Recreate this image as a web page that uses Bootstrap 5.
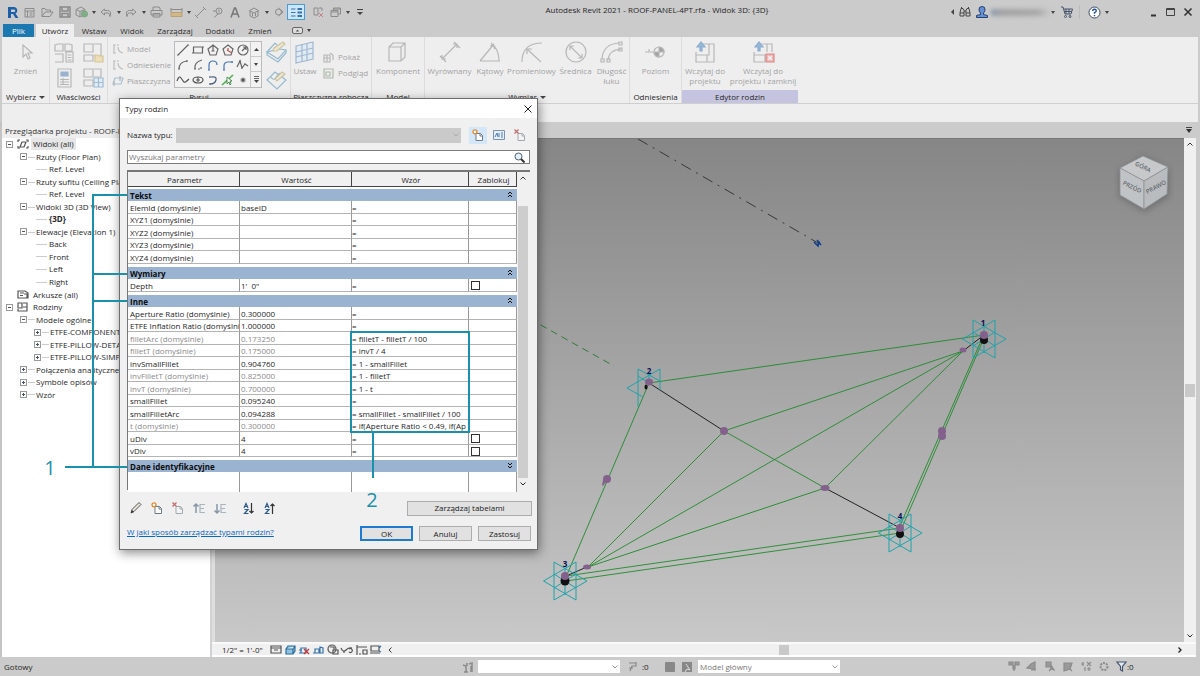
<!DOCTYPE html>
<html lang="pl">
<head>
<meta charset="utf-8">
<meta name="viewport" content="width=device-width, initial-scale=1">
<title>Autodesk Revit 2021</title>
<link href="https://cdn.jsdelivr.net/npm/bootstrap@5.3.0/dist/css/bootstrap.min.css" rel="stylesheet">
<style>
:root{--chrome:#cbcbcb;--pane:#eeeeee;--accent:#1b90ab;--line:#d4d4d4}
body{font-family:"Open Sans","Noto Sans",sans-serif;font-size:8px;line-height:12px;color:#262626;background:var(--chrome)}
button,input,select{font:inherit;color:inherit}
svg{display:block;flex:none;overflow:visible}
.ico{fill:none;stroke:#8b8b8b;stroke-width:1.2}
.tb{border:0;background:none;padding:0;display:flex;align-items:center;justify-content:center;flex:none}
.q17{width:17px}.q18{width:18px}.q7{width:7px}
.titlebar{height:24px}
.titlebar .ico{stroke-width:1}
.qsep{width:1px;height:14px;background:#bbb;margin:0 1px}
.caret{width:0;height:0;border:2px solid transparent;border-top:3px solid #444;border-bottom:0}
.panel h2 .caret{display:inline-block;vertical-align:middle;margin-left:3px;border-width:3px;border-bottom:0}
.on{background:#cce6fa;outline:1px solid #4b9bd8;outline-offset:-1px;height:16px}
.acct{width:58px;height:7px;margin-left:1px;background:linear-gradient(90deg,#8f9bb0,#a2a2a2 20%,#a8a8a8 80%,#c6c6c6);filter:blur(2px)}
.tabs{height:13px;padding-left:3px}
.tabs a{color:#2d2d2d;text-align:center;text-decoration:none;line-height:13px;height:13px}
.tabs .file{width:31px;background:#1c78b0;color:#fff;margin-right:2px}
.tabs .cur{width:38px;background:var(--pane)}
.t40{width:40px}.t36{width:36px}.t50{width:50px}
.ribbon{height:67px;background:var(--pane);margin:0 2px;border-bottom:1px solid #cfcfcf}
.panel{border-right:1px solid #dcdcdc;flex:none}
.panel h2{font-size:8px;line-height:13px;height:13px;margin:0;font-weight:400;text-align:center;white-space:nowrap}
.pbody{height:53px}
.rb{border:0;background:none;padding:4px 0 0;display:flex;flex-direction:column;align-items:center;color:#a3a3a3;line-height:10px;gap:3px;flex:none;white-space:nowrap}
.rb svg,.faded svg{opacity:.55}
.rs{border:0;background:none;padding:0;display:flex;align-items:center;gap:4px;color:#a3a3a3;height:16px;white-space:nowrap}
.gallery{width:88px;height:47px;border:1px solid #bbb;background:#f2f2f2}
.gallery .cells{display:grid;grid-template-columns:repeat(5,15px);flex:1}
.gscroll{width:11px;border-left:1px solid #c6c6c6}
.gscroll button{height:15px;width:10px;border-bottom:1px solid #ccc}
.optbar{height:18px;background:var(--pane);margin:0 2px}
.browser{width:212px;border-left:2px solid #c4c4c4;border-right:2px solid #d2d2d2;background:#fff}
.browser h1{font-size:8px;font-weight:400;line-height:17px;height:16px;margin:0;padding-left:3px;background:#eee;white-space:nowrap;overflow:hidden;color:#333}
.tree{height:263px;display:grid;grid-template-rows:repeat(21,1fr);padding:0;margin:0;list-style:none}
.tree li{display:flex;align-items:center;white-space:nowrap;position:relative}
.l0{padding-left:4px}.l1{padding-left:18px}.l2{padding-left:32px}.l3{padding-left:34px}
.tree .pm{width:7px;height:7px;border:1px solid #999;background:#fff;position:relative;margin-right:9px;flex:none}
.pm:before{content:"";position:absolute;left:1px;right:1px;top:2px;height:1px;background:#456}
.pm.plus:after{content:"";position:absolute;top:1px;bottom:1px;left:2px;width:1px;background:#456}
.tree .l0 .pm{margin-right:4px}
.pm + span:before{content:"";position:absolute;height:1px;width:7px;background:#ccc;margin-left:-8px;top:6px}
.dash{width:11px;height:1px;background:#ccc;margin-right:2px;flex:none}
.tree .trunk{position:absolute;left:22px;width:1px;background:#ddd}
.view{min-width:0}
.doctab{height:16px}
.scene{background:linear-gradient(#868686,#c8c8c8);min-height:200px;border-top:1px solid #777}
.vscroll{width:12px;background:#f0f0f0}
.vthumb{width:10px;height:13px;background:#c9c9c9}
.viewbar{height:15px;background:#f0f0f0;border-top:2px solid #fafafa;border-bottom:2px solid #fff}
.status{height:19px}
.status select{height:13px;border:0;border-radius:0;background:#fff;font-size:8px;line-height:12px;padding:0 2px;color:#777;appearance:none}
.selbox{position:relative}
.selbox svg{position:absolute;right:2px;top:5px}
/* family types window */
.dlg{position:absolute;left:119px;top:98px;width:419px;height:452px;background:#f0f0f0;border:1px solid #6d6d6d;box-shadow:1px 3px 10px rgba(0,0,0,.45)}
.dlg header{height:19px;background:#fff;padding:0 5px}
.dlg .inner{padding:8px 7px 0}
.typesel{width:285px;height:15px;border:0;background:#cacaca;appearance:none;border-radius:0}
.find{height:14px;border:1px solid #7d7d7d;background:#fff;margin-top:6px}
.find input{border:0;outline:0;height:12px;padding:0 1px;background:none;flex:1}
.find input::placeholder{color:#777;opacity:1}
.gridwrap{margin-top:6px;height:320px;border-top:2px solid #777;border-left:1px solid #777}
.ptab{width:389px;table-layout:fixed;border-collapse:separate;border-spacing:0;background:#fff;flex:none;align-self:flex-start}
.ptab td,.ptab th{padding:0 0 0 2px;height:12px;line-height:11px;border-right:1px solid #999;border-bottom:1px solid #b4b4b4;white-space:nowrap;overflow:hidden}
.ptab tr.h13 td{height:13px}
.ptab thead th{height:15px;font-weight:400;text-align:center;background:#f0f0f0;border-color:#444}
.ptab tr.gap td{height:3px;border:0;line-height:1px}
.ptab tr.gap:first-child td{height:2px}
.ptab tr.sec th{background:#9ab3d1;height:12px;border:0;font-weight:700;color:#0c0c0c}
.ptab tr.gray td:nth-child(-n+2){color:#8a8a8a}
.ptab td:nth-child(2){padding-left:1px}
.ptab td:nth-child(3){padding-left:0}
.ptab tr.tail td{height:20px;border-bottom:0}
.ptab input{appearance:none;width:9px;height:9px;border:1px solid #333;background:#fff;margin:1px 0 0;display:block}
.sec button{float:right;margin:1px 4px 0 0}
.tthumb{background:#cdcdcd;width:10px;flex:1}
.wb{border:1px solid #adadad;background:#e1e1e1;padding:0;height:15px;line-height:12px;width:53px;color:#222}
.wb.def{border:2px solid #1f7ad1;line-height:11px}
.dlg a{color:#0a66c2}
.notes{position:absolute;left:0;top:0;pointer-events:none}
</style>
</head>
<body class="min-vh-100 d-flex flex-column position-relative overflow-hidden">

<svg width="0" height="0" class="position-absolute">
<defs>
<symbol id="newdoc" viewBox="0 0 12 12"><path d="M4 4.500h4.500l2 2v5h-6.500z" fill="#fff" stroke="#6d7a87"/><path d="M8 4.500v2.500h2.500" fill="none" stroke="#6d7a87"/><circle cx="3" cy="2.800" r="2" fill="#fff" stroke="#e0872f" stroke-width="1.300"/></symbol>
<symbol id="deldoc" viewBox="0 0 12 12"><path d="M4 4.500h4.500l2 2v5h-6.500z" fill="#f4f4f4" stroke="#a3a9ad"/><path d="M8 4.500v2.500h2.500" fill="none" stroke="#a3a9ad"/><path d="M.500.500l4 4M4.500.500l-4 4" stroke="#c06a6a" stroke-width="1.200" fill="none"/></symbol>
<symbol id="star" viewBox="-24 -22 48 44"><path d="M-21.500 0L11 -19V19ZM22 0L-11 -19V19ZM0 -13V14M-11 7L11 -7M-11 -7L11 7" fill="none" stroke="#1fa3ab" stroke-width="1"/></symbol>
<symbol id="chev" viewBox="0 0 6 4"><path d="M.500.500L3 3L5.500.500" fill="none" stroke="currentColor"/></symbol>
</defs>
</svg>

<header>
<div class="titlebar d-flex align-items-center">
  <div class="d-flex align-items-center ps-1 flex-shrink-0" style="width:365px">
    <button class="tb q17" aria-label="Revit"><svg width="12" height="13" viewBox="0 0 12 13"><path d="M1 1h6.500a3.500 3.500 0 0 1 1 6.500l3 4.500h-3l-2.500-4h-2v4h-3zM4 3.500v2.500h3a1.250 1.250 0 0 0 0-2.500z" fill="#1d5fa6" fill-rule="evenodd"/></svg></button>
    <button class="tb q17" aria-label="Strona główna"><svg class="ico" width="11" height="11"><path d="M1 1.500h9v8.500h-9zM1 4h9M3.500 4v6M5.500 6h3M5.500 8h3"/></svg></button>
    <button class="tb q18" aria-label="Otwórz"><svg class="ico" width="13" height="11"><path d="M1 9.500v-8h3l1 1.500h4.500v2M1 9.500l3-4.500h8l-3 4.500z"/></svg></button>
    <button class="tb q17" aria-label="Zapisz"><svg class="ico" width="12" height="12"><path d="M1 1h10v10h-10zM3 1v4h6v-4M3 11v-3.500h6v3.500" style="stroke-width:1.500"/></svg></button>
    <button class="tb q17" aria-label="Synchronizuj"><svg class="ico" width="13" height="12"><path d="M1 3.500l5-2.500 4 2.500v5l-5 2.500-4-2zM1 3.500l4 2 5-2M5 5.500v5"/><circle cx="9.500" cy="8" r="3" fill="#7fae86" stroke="#77a87e"/></svg></button>
    <button class="tb q7" aria-label="Więcej"><i class="caret"></i></button>
    <button class="tb q18" aria-label="Cofnij"><svg class="ico" width="12" height="9"><path d="M4.500 1l-3.500 3 3.500 3v-2h3.500q2 .500 2 3.500 2-6-2.500-6h-3z"/></svg></button>
    <button class="tb q7" aria-label="Więcej"><i class="caret"></i></button>
    <button class="tb q18" aria-label="Ponów"><svg class="ico" width="12" height="9"><path d="M7.500 1l3.500 3-3.500 3v-2h-3.500q-2 .500-2 3.500-2-6 2.500-6h3z"/></svg></button>
    <button class="tb q7" aria-label="Więcej"><i class="caret"></i></button>
    <button class="tb q18" aria-label="Drukuj"><svg class="ico" width="13" height="12"><path d="M3 4.500v-3.500h6l1 1v2.500M1 4.500h11v4.500h-11zM3 9v-1.500h7v3.500h-7z"/></svg></button>
    <i class="qsep"></i>
    <button class="tb q18" aria-label="Mierz"><svg class="ico" width="13" height="11"><path d="M1 1v4M12 1v4M1 2.500h11"/><path d="M1 5.500h11v4h-11z" fill="#d3b887" stroke="#b79f77"/></svg></button>
    <button class="tb q7" aria-label="Więcej"><i class="caret"></i></button>
    <button class="tb q17" aria-label="Wymiar"><svg class="ico" width="11" height="11"><path d="M1.500 9.500l8-8M0 8l3 3M8 0l3 3"/></svg></button>
    <button class="tb q17" aria-label="Etykieta"><svg class="ico" width="11" height="11"><circle cx="7" cy="4" r="3"/><path d="M4 4h-3M6 7l-4 3.500M7 2.500v3"/></svg></button>
    <button class="tb q17" aria-label="Tekst"><svg class="ico" width="10" height="11"><path d="M1 10.500l3.500-9.500h1l3.500 9.500M2.500 7h5" style="stroke:#777;stroke-width:1.500"/></svg></button>
    <i class="qsep"></i>
    <button class="tb q18" aria-label="Widok 3D"><svg class="ico" width="12" height="11"><path d="M1 4l5-3 5 3M2 4v5l4 2 4-2v-5M4.500 6v3M7.500 6v3M2 4l4 2 4-2"/></svg></button>
    <button class="tb q7" aria-label="Więcej"><i class="caret"></i></button>
    <button class="tb q17" aria-label="Przekrój"><svg class="ico" width="10" height="10"><circle cx="4.500" cy="5" r="3"/><path d="M4.500 1l4.500 4-4.500 4"/></svg></button>
    <button class="tb q18 on" aria-label="Cienkie linie"><svg class="ico" width="13" height="11"><path d="M1 2h4.500M1 5.500h4.500M1 9h4.500" stroke="#3873ad"/><path d="M7.500 2h4.500M7.500 5.500h4.500M7.500 9h4.500" style="stroke:#3873ad;stroke-width:2"/></svg></button>
    <button class="tb q18 ms-1" aria-label="Zamknij ukryte"><svg class="ico" width="11" height="11"><path d="M1 1h4v7h-4zM6 1h3v3"/><path d="M6 6l4 4M10 6l-4 4" stroke="#c78484"/></svg></button>
    <button class="tb q17" aria-label="Przełącz okna"><svg class="ico" width="12" height="11"><path d="M1 3.500h7v6h-7zM1 5h7M3.500 3.500v-2.500h7v6h-2.500M3.500 2h7"/></svg></button>
    <button class="tb q7" aria-label="Więcej"><i class="caret"></i></button>
    <button class="tb q17" aria-label="Dostosuj"><svg width="6" height="7"><path d="M0 .500h6" stroke="#444"/><path d="M0 3h6l-3 3z" fill="#444"/></svg></button>
  </div>
  <div class="flex-grow-1 text-center text-nowrap pb-1">Autodesk Revit 2021 - ROOF-PANEL-4PT.rfa - Widok 3D: {3D}</div>
  <div class="d-flex align-items-center flex-shrink-0" style="width:251px">
    <button class="tb q7" aria-label="Zwiń"><svg width="3" height="6"><path d="M3 0v6l-3-3z" fill="#444"/></svg></button>
    <button class="tb q17" aria-label="Szukaj"><svg class="ico" width="12" height="12"><path d="M1 7l1-4.500h2l1 2v5.500h-4zM7 4.500l1-2h2l1 4.500v3h-4zM5 5h2M1 7h4M7 7h4" stroke="#444"/><path d="M2.500 1v2M9.500 1v2" stroke="#444"/></svg></button>
    <button class="tb q17" aria-label="Konto"><svg width="12" height="12"><path d="M6 .500q3.500 0 3 3.500-.200 2-1.500 3v1.500l4 1v2h-11v-2l4-1v-1.500q-1.300-1-1.500-3-.500-3.500 3-3.500z" fill="#6690d6" stroke="#24406e"/></svg></button>
    <span class="acct"></span>
    <button class="tb q7" aria-label="Więcej"><i class="caret"></i></button>
    <button class="tb" style="width:22px" aria-label="Sklep"><svg class="ico" width="12" height="12"><path d="M0 1h2l2 7h6l1.500-5h-9M5 3v5M8 3v5M3 5.500h8" stroke="#47556b"/><circle cx="4.500" cy="10.500" r="1" stroke="#47556b"/><circle cx="9" cy="10.500" r="1" stroke="#47556b"/></svg></button>
    <i class="qsep"></i>
    <button class="tb q18 ms-1" aria-label="Pomoc"><svg width="13" height="13"><circle cx="6.500" cy="6.500" r="5.500" fill="#fff" stroke="#3b4b66"/><path d="M4.700 5q0-1.800 1.800-1.800t1.800 1.500q0 1-1.800 2v1M6.500 9v1.300" fill="none" stroke="#234d9a" stroke-width="1.400"/></svg></button>
    <button class="tb q7" aria-label="Więcej"><i class="caret"></i></button>
    <span class="flex-grow-1"></span>
    <button class="tb q18" aria-label="Minimalizuj"><svg width="7" height="9"><path d="M1 7.500h5" stroke="#333" stroke-width="2"/></svg></button>
    <button class="tb q17" aria-label="Maksymalizuj"><svg width="9" height="8"><path d="M.500.500h8v7h-8zM.500 1.500h8" fill="none" stroke="#444"/></svg></button>
    <button class="tb q17 me-1" aria-label="Zamknij"><svg width="8" height="8"><path d="M.500.500l7 7M7.500.500l-7 7" stroke="#333" stroke-width="1.600"/></svg></button>
  </div>
</div>
<nav class="tabs d-flex align-items-center">
  <a href="#" class="file">Plik</a><a href="#" class="cur">Utwórz</a><a href="#" class="t40">Wstaw</a><a href="#" class="t36">Widok</a><a href="#" class="t50">Zarządzaj</a><a href="#" class="t40">Dodatki</a><a href="#" class="t40">Zmień</a>
  <button class="tb ms-2 ps-1 gap-1" aria-label="Zwiń wstążkę"><svg width="11" height="7"><rect x=".5" y=".5" width="10" height="6" rx="1.500" fill="#ddd" stroke="#666"/><path d="M4 4.500l1.500-2 1.500 2z" fill="#444"/></svg><i class="caret"></i></button>
</nav>
</header>

<section class="ribbon d-flex" aria-label="Wstążka">
  <div class="panel" style="width:48px"><div class="pbody d-flex justify-content-center"><button class="rb"><svg class="ico" width="20" height="22"><path d="M7 4v12l3-3 2 5 2-1-2-5h4z"/></svg>Zmień</button></div><h2>Wybierz<i class="caret"></i></h2></div>
  <div class="panel" style="width:58px"><div class="pbody faded d-grid pt-1" style="grid-template-columns:1fr 1fr;justify-items:center;align-items:center">
    <button class="tb" aria-label="Właściwości rodziny"><svg class="ico" width="20" height="20"><path d="M1 2l3-1h5v7h-8zM11 1h4l3 1v6h-7zM1 11h8v8h-8M12 9h7v10h-7zM13.500 12h4M13.500 14.500h4M13.500 17h4"/></svg></button>
    <button class="tb" aria-label="Typy"><svg class="ico" width="20" height="20"><path d="M1 1h9v8h-9zM11 1h7v12h-7M1 12h9v6h-9z"/><path d="M12 12h3l1 1h4v6h-8z" fill="#ecd18f" stroke="#c9a64e"/></svg></button>
    <button class="tb" aria-label="Właściwości"><svg class="ico" width="15" height="20"><path d="M1 1h13v18h-13z"/><path d="M4 4h7v4h-7z" fill="#5584b5" stroke="#5584b5"/><path d="M3 11.500h9M3 14h9M3 16.500h9M6 10v7"/></svg></button>
    <button class="tb" aria-label="Typy rodzin"><svg class="ico" width="20" height="20"><path d="M1 1h9v8h-9zM11 1h7v8h-7M1 12h9v6h-9z"/><path d="M11 10h9v9h-9zM15.500 10v9M11 14.500h9" fill="#dcebf8" stroke="#5f94c4"/></svg></button>
  </div><h2>Właściwości</h2></div>
  <div class="panel" style="width:183px"><div class="pbody d-flex pt-1">
    <div class="faded" style="width:66px;padding-left:4px">
      <button class="rs"><svg class="ico" width="11" height="10"><path d="M2 1v8M1 1h3M1 9h3M6 3q0 5 5 6M5 1h2M10 9h1" stroke="#999"/></svg>Model</button>
      <button class="rs"><svg class="ico" width="11" height="10"><path d="M2 1v8M1 1h3M1 9h3M6 3q0 5 5 6M5 1h2M10 9h1" stroke="#999"/></svg>Odniesienie</button>
      <button class="rs"><svg class="ico" width="11" height="10"><path d="M3 2h8l-2 6h-8z" stroke="#6a9ac4"/><path d="M8 0v5M2 5v5" stroke="#888"/></svg>Płaszczyzna</button>
    </div>
    <div class="gallery d-flex">
      <div class="cells">
        <button class="tb" aria-label="Linia"><svg class="ico" width="12" height="12" style="stroke:#666"><path d="M1 11l10-10M0 11h2M10 1h2"/></svg></button>
        <button class="tb" aria-label="Prostokąt"><svg class="ico" width="12" height="12" style="stroke:#666"><path d="M1.500 3h9v6h-9zM0 9h3M9 3h3"/></svg></button>
        <button class="tb" aria-label="Wielokąt wpisany"><svg class="ico" width="12" height="12" style="stroke:#666"><path d="M6 1l5 4-2 6h-6l-2-6zM6 2v5M4.500 7h3"/></svg></button>
        <button class="tb" aria-label="Wielokąt opisany"><svg class="ico" width="12" height="12" style="stroke:#666"><path d="M6 1l5 4-2 6h-6l-2-6z"/><path d="M5 6l5 3M6 4v3" stroke="#b55"/></svg></button>
        <button class="tb" aria-label="Okrąg"><svg class="ico" width="12" height="12" style="stroke:#666"><circle cx="6" cy="6" r="5"/><path d="M5 7l4-4M6 3h3v3"/></svg></button>
        <button class="tb" aria-label="Łuk"><svg class="ico" width="12" height="12" style="stroke:#666"><path d="M2 10q0-7 8-8M1 10h2M10 1v2M4 4h1"/></svg></button>
        <button class="tb" aria-label="Łuk środkowy"><svg class="ico" width="12" height="12" style="stroke:#666"><path d="M3 10q-1-7 7-9M2 10h2M9 8v2M6 10h2"/></svg></button>
        <button class="tb" aria-label="Łuk styczny"><svg class="ico" width="12" height="12" style="stroke:#4677b0"><path d="M2 11v-5q0-4 4-4t4 4M1 11h2"/></svg></button>
        <button class="tb" aria-label="Zaokrąglenie"><svg class="ico" width="12" height="12" style="stroke:#4677b0"><path d="M2 11v-4q0-4 4-4h5M1 11h2M10 2v2"/></svg></button>
        <button class="tb" aria-label="Splajn"><svg class="ico" width="13" height="12" style="stroke:#666"><path d="M1 8l3-6 2 7 3-4 3 2M3 2h2M5 9h2M8 5h2"/></svg></button>
        <button class="tb" aria-label="Splajn przez punkty"><svg class="ico" width="12" height="12" style="stroke:#555"><path d="M0 7q2-6 4-3t3 4 5-3"/></svg></button>
        <button class="tb" aria-label="Elipsa"><svg class="ico" width="12" height="12" style="stroke:#555"><ellipse cx="6" cy="6" rx="5" ry="3"/><path d="M6 3v5M4 6h4"/></svg></button>
        <button class="tb" aria-label="Elipsa częściowa"><svg class="ico" width="12" height="12" style="stroke:#4a5a78"><path d="M4 3q6-1 5 3t-6 4"/><path d="M3 2v2M3 9v2"/></svg></button>
        <button class="tb" aria-label="Wybierz linie"><svg class="ico" width="12" height="12"><path d="M0 11l11-10" stroke="#4cae4f" stroke-width="1.600"/><path d="M5 3v7l2-2 1 3 1-1-1-3h2z" fill="#fff" stroke="#2f7d35" stroke-width=".8"/></svg></button>
        <button class="tb" aria-label="Punkt"><svg class="ico" width="12" height="12"><circle cx="6" cy="6" r="2" fill="#555" stroke="#999"/></svg></button>
      </div>
      <div class="gscroll"><button class="tb" aria-label="W górę"><svg width="5" height="3"><path d="M0 3h5l-2.500-3z" fill="#444"/></svg></button><button class="tb" aria-label="W dół"><i class="caret"></i></button><button class="tb border-0" aria-label="Rozwiń"><svg width="5" height="7"><path d="M0 .500h5M0 2.500h5" stroke="#666"/><path d="M0 4h5l-2.500 3z" fill="#444"/></svg></button></div>
    </div>
    <div class="d-flex flex-column justify-content-between align-items-center faded flex-grow-1">
      <button class="tb" aria-label="Rysuj na powierzchni"><svg class="ico" width="21" height="22"><path d="M1 11l8-9 4 4M13 8l7 1-8 9-11-7zM1 11v3l11 7 8-9v-3" stroke="#4e8fb6"/><path d="M7 10l1-3 9-6 2 2-8 7z" fill="#efe3b8" stroke="#b0a06a"/></svg></button>
      <button class="tb" aria-label="Rysuj na płaszczyźnie"><svg class="ico" width="21" height="20"><path d="M1 10l8-8 11 8-9 9z" stroke="#4e8fb6"/><path d="M5 7q3 5 6-1t6 1" stroke="#4e8fb6"/><path d="M9 9l7-7 3 2-8 7z" fill="#efe3b8" stroke="#b0a06a"/></svg></button>
    </div>
  </div><h2>Rysuj</h2></div>
  <div class="panel" style="width:81px"><div class="pbody d-flex">
    <button class="rb" style="width:28px"><svg class="ico" width="20" height="22"><path d="M1 5l17-4v17l-17 4zM7 4v17M12 2v17M1 11l17-4M1 16l17-4" fill="#dbe9f6" stroke="#5f8fbb"/></svg>Ustaw</button>
    <div class="faded ps-1" style="padding-top:12px">
      <button class="rs"><svg class="ico" width="11" height="11"><path d="M1 3h6v7h-6zM1 6h6M4 3v7M7 1l3 2v5"/></svg>Pokaż</button>
      <button class="rs"><svg class="ico" width="11" height="11"><path d="M1 1h9v9h-9zM3 4h4v4h-4z" stroke="#7c9478"/></svg>Podgląd</button>
    </div></div><h2 class="overflow-hidden">Płaszczyzna robocza</h2></div>
  <div class="panel" style="width:53px"><div class="pbody d-flex justify-content-center"><button class="rb"><svg class="ico" width="22" height="22"><path d="M2 6l4-4h12v14l-4 4h-12zM2 6h12v14M14 6l4-4"/></svg>Komponent</button></div><h2>Model</h2></div>
  <div class="panel" style="width:205px"><div class="pbody d-flex">
    <button class="rb" style="width:49px"><svg class="ico" width="22" height="22"><path d="M3 18l15-15M1 15l6 6M15 1l6 6M3 14v4h4M14 3h4v4"/></svg>Wyrównany</button>
    <button class="rb" style="width:32px"><svg class="ico" width="22" height="22"><path d="M1 20h20M1 20l14-17M12 2q8 6 8 18M11 5l3-1 2 4"/></svg>Kątowy</button>
    <button class="rb" style="width:51px"><svg class="ico" width="22" height="22"><path d="M1 21q0-19 20-19M6 8l14 13M6 13v-5h5"/></svg>Promieniowy</button>
    <button class="rb" style="width:37px"><svg class="ico" width="22" height="22"><circle cx="11" cy="11" r="10"/><path d="M5 5l12 12M5 9v-4h4M17 13v4h-4"/></svg>Średnica</button>
    <button class="rb" style="width:35px"><svg class="ico" width="22" height="22"><path d="M1 18q1-15 17-16M7 19q1-10 13-11M0 18h3v3h-3zM6 18h3v3h-3zM18 1h3v3h-3zM18 7h3v3h-3z"/></svg><span>Długość<br>łuku</span></button>
  </div><h2>Wymiar<i class="caret"></i></h2></div>
  <div class="panel" style="width:52px"><div class="pbody d-flex justify-content-center"><button class="rb"><svg class="ico" width="22" height="22"><path d="M0 11h8M4 8v3"/><circle cx="14" cy="11" r="5"/><path d="M14 11v-5a5 5 0 0 1 5 5zM14 11v5a5 5 0 0 1-5-5z" fill="#666"/></svg>Poziom</button></div><h2>Odniesienia</h2></div>
  <div class="panel border-0" style="width:116px"><div class="pbody d-flex">
    <button class="rb" style="width:46px"><svg class="ico" width="20" height="22"><path d="M8 3h11v18h-18v-10M1 14h11v7M12 14h-1M14 3v11h-3"/><path d="M5 10v-4h-3l4-5 4 5h-3v4z" fill="#4f8fcb" stroke="#3f79b3"/></svg><span>Wczytaj do<br>projektu</span></button>
    <button class="rb" style="width:70px"><svg class="ico" width="20" height="22"><path d="M8 3h11v8M12 21h-11v-10M1 14h11v7M14 3v8"/><path d="M5 10v-4h-3l4-5 4 5h-3v4z" fill="#4f8fcb" stroke="#3f79b3"/><path d="M13 13h8v8h-8z" fill="#e88" stroke="#c33"/><path d="M15 15l4 4M19 15l-4 4" stroke="#fff"/></svg><span>Wczytaj do<br>projektu i zamknij</span></button>
  </div><h2 style="background:#c5c4e0">Edytor rodzin</h2></div>
</section>
<div class="optbar"></div>

<main class="d-flex flex-grow-1">
  <aside class="browser flex-shrink-0">
    <h1>Przeglądarka projektu - ROOF-PANEL-4PT.rfa</h1>
    <ul class="tree">
      <li class="l0"><i class="pm"></i><svg class="ico me-1" width="12" height="10"><path d="M3 1h-2v2M9 1h2v2M3 9h-2v-2M9 9h2v-2" stroke="#555"/><path d="M5 3h4l-2 5h-4z" stroke="#555"/></svg><b class="fw-normal" style="background:#e6e6e6;padding:0 2px;margin-left:-2px">Widoki (all)</b></li>
      <li class="l1"><i class="pm"></i><span>Rzuty (Floor Plan)</span></li>
      <li class="l3"><i class="dash"></i>Ref. Level</li>
      <li class="l1"><i class="pm"></i><span>Rzuty sufitu (Ceiling Plan)</span></li>
      <li class="l3"><i class="dash"></i>Ref. Level</li>
      <li class="l1"><i class="pm"></i><span>Widoki 3D (3D View)</span></li>
      <li class="l3"><i class="dash"></i><b>{3D}</b></li>
      <li class="l1"><i class="pm"></i><span>Elewacje (Elevation 1)</span></li>
      <li class="l3"><i class="dash"></i>Back</li>
      <li class="l3"><i class="dash"></i>Front</li>
      <li class="l3"><i class="dash"></i>Left</li>
      <li class="l3"><i class="dash"></i>Right</li>
      <li class="l0" style="padding-left:15px"><svg class="ico me-1" width="12" height="9"><path d="M1 1h7l3 2v5h-10zM3 3h4M3 5.500h3M7 4h3v4" stroke="#555"/></svg>Arkusze (all)</li>
      <li class="l0"><i class="pm"></i><svg class="ico me-1" width="12" height="10"><path d="M1 1h4v5h-4zM6 1h4v8h-9v-2M6 5h4" stroke="#555"/></svg>Rodziny</li>
      <li class="l1"><i class="pm"></i><span>Modele ogólne</span></li>
      <li class="l2"><i class="pm plus"></i><span>ETFE-COMPONENT</span></li>
      <li class="l2"><i class="pm plus"></i><span>ETFE-PILLOW-DETAIL</span></li>
      <li class="l2"><i class="pm plus"></i><span>ETFE-PILLOW-SIMPLE</span></li>
      <li class="l1"><i class="pm plus"></i><span>Połączenia analityczne</span></li>
      <li class="l1"><i class="pm plus"></i><span>Symbole opisów</span></li>
      <li class="l1"><i class="pm plus"></i><span>Wzór</span></li>
    </ul>
  </aside>
  <section class="view flex-grow-1 d-flex flex-column pe-1">
    <div class="doctab d-flex align-items-center justify-content-end pe-1"><svg width="6" height="6"><path d="M0 .500h6" stroke="#444"/><path d="M0 2h6l-3 4z" fill="#333"/></svg></div>
    <div class="d-flex flex-grow-1" style="background:#dedede;padding-left:3px">
      <div class="scene flex-grow-1 position-relative overflow-hidden">
        <svg class="position-absolute top-0 start-0" width="100%" height="100%" viewBox="215 139 969 503" preserveAspectRatio="xMinYMin slice">
          <path d="M638 139L818 243" stroke="#222" fill="none" stroke-width=".8" stroke-dasharray="11 6 2 6"/>
          <path d="M814 242l4 4 1-5M817 240l4 5" stroke="#0b3c8c" stroke-width="1.500" fill="none"/>
          <path d="M530 319L614 366" stroke="#2f7d38" fill="none" stroke-dasharray="7 5"/>
          <g fill="none" stroke="#1f8a2a" stroke-width=".9">
            <path d="M649 383L984 335M724 431L963 351M588 567L963 351M825 488L963 351M724 431L588 567M825 488L588 567M724 431L825 488"/>
            <path d="M649 383L566 577M984 338L901 530M981 341L899 528M566 576L900 528M566 581L900 533"/>
          </g>
          <path d="M649 383L724 431M825 488L900 528M963 351L984 335M587 567L566 576" stroke="#222" fill="none"/>
          <use href="#star" x="960" y="317" width="48" height="44"/>
          <use href="#star" x="876" y="511" width="48" height="44"/>
          <use href="#star" x="541" y="559" width="48" height="44"/>
          <path d="M638 407V369L660 381M660 369V390M627 388L660 369M627 388L643 397M638 376L649 383M649 374V384" fill="none" stroke="#1fa3ab"/>
          <g fill="#111"><circle cx="984" cy="340" r="4"/><circle cx="900" cy="534" r="4"/><circle cx="565" cy="581" r="4.500"/><ellipse cx="646" cy="387" rx="1.500" ry="2.500"/></g>
          <g fill="#84618c"><circle cx="984" cy="335" r="4"/><circle cx="900" cy="528" r="4"/><circle cx="565" cy="576" r="4"/><ellipse cx="649" cy="382" rx="4" ry="3.500"/><circle cx="724" cy="431" r="4"/><ellipse cx="825" cy="488" rx="4.500" ry="3"/><ellipse cx="963" cy="350" rx="3.500" ry="2.500"/><ellipse cx="587" cy="567" rx="4" ry="2.500"/><circle cx="607" cy="479" r="4"/><path d="M603 480l-1 6 2-1 2-4z"/><circle cx="942" cy="431" r="4"/><circle cx="942" cy="436" r="4"/></g>
          <g fill="#0a0f55" font-weight="700" font-size="8" text-anchor="middle"><text x="983" y="326">1</text><text x="649" y="374">2</text><text x="565" y="567">3</text><text x="900" y="519">4</text></g>
          <defs><filter id="soft"><feGaussianBlur stdDeviation="3"/></filter></defs>
          <path d="M1119 170L1144 156L1169 170V197L1144 212L1119 197Z" fill="#555" opacity=".5" filter="url(#soft)"/>
          <g stroke="#8f9396" stroke-width=".8"><path d="M1120 168L1143 156L1168 167L1144 181Z" fill="#c6c8ca"/><path d="M1120 168L1144 181V209L1120 195Z" fill="#c0c3c5"/><path d="M1168 167L1144 181V209L1167 194Z" fill="#b9bcbf"/></g>
          <g fill="#65696d" font-size="6" font-weight="600" text-anchor="middle"><text transform="translate(1143 167) rotate(27)" y="2">GÓRA</text><text transform="translate(1132 187) rotate(27)" y="2">PRZÓD</text><text transform="translate(1156 187) rotate(-28)" y="2">PRAWO</text></g>
        </svg>
      </div>
      <div class="vscroll d-flex flex-column justify-content-between align-items-center py-1">
        <button class="tb" aria-label="Przewiń w górę"><svg width="6" height="4"><path d="M.500 3.500L3 1l2.500 2.500" fill="none" stroke="#333"/></svg></button>
        <i class="vthumb"></i>
        <button class="tb" aria-label="Przewiń w dół"><svg width="6" height="4"><use href="#chev"/></svg></button>
      </div>
    </div>
    <div class="viewbar d-flex align-items-center">
      <span class="text-nowrap" style="width:56px;padding-left:10px">1/2" = 1'-0"</span>
      <button class="tb" style="width:15px" aria-label="Poziom szczegółów"><svg class="ico" width="12" height="9" style="stroke:#555"><path d="M1 1h10v7h-10zM1 3h10M4 5h4"/></svg></button>
      <button class="tb" style="width:14px" aria-label="Styl wizualny"><svg class="ico" width="11" height="10"><path d="M1 4l2-3h7v5l-2 3h-7zM1 4h7l2-3M8 4v5" fill="#8fc3e0" stroke="#2d6f9a"/></svg></button>
      <button class="tb" style="width:14px" aria-label="Cienie"><svg class="ico" width="12" height="10"><path d="M1 8h5M3 3h5v5h-5zM1 5h3" stroke="#3470ad"/><path d="M6 4l5 5M11 4l-5 5" stroke="#c33"/></svg></button>
      <button class="tb" style="width:14px" aria-label="Kadruj"><svg class="ico" width="12" height="10"><path d="M1 8h5M3 4h4v4h-4zM8 2v6h3v-5z" stroke="#3470ad"/></svg></button>
      <button class="tb" style="width:15px" aria-label="Region kadrowania"><svg class="ico" width="12" height="11" style="stroke:#555"><circle cx="5" cy="5" r="4"/><path d="M3 3h4v3M6 6h5v4h-5z"/></svg></button>
      <button class="tb" style="width:14px" aria-label="Ukryj tymczasowo"><svg class="ico" width="12" height="8" style="stroke:#555"><path d="M0 2q2 5 5 2t6-2M8 6a2 2 0 1 0 0-3M3 5v2"/></svg></button>
      <button class="tb" style="width:15px" aria-label="Ograniczenia"><svg class="ico" width="12" height="10" style="stroke:#555"><path d="M1 0v10M1 2h10M7 5h4v4h-4zM3 9h2"/></svg></button>
      <button class="tb" style="width:14px" aria-label="Podgląd widoczności"><svg class="ico" width="12" height="9" style="stroke:#555"><path d="M1 1h8v5h-8zM0 8h10"/><path d="M9 3l2-2M9 6l2 1" stroke="#3470ad"/></svg></button>
      <button class="tb" style="width:14px" aria-label="Zwiń pasek"><svg width="4" height="6"><path d="M3.500.500L1 3l2.500 2.500" fill="none" stroke="#333"/></svg></button>
      <span class="flex-grow-1"></span><i class="vthumb" style="height:10px"></i><span class="flex-grow-1"></span>
      <button class="tb q17 me-2" aria-label="Przewiń w prawo"><svg width="4" height="6"><path d="M.500.500L3 3L.500 5.500" fill="none" stroke="#222" stroke-width="1.300"/></svg></button>
    </div>
  </section>
</main>

<footer class="status d-flex align-items-center">
  <span style="width:462px;padding-left:4px">Gotowy</span>
  <svg class="ico me-1" width="12" height="12"><path d="M1 4l3 1v6M2 11h4M7 3l3-1v9M9 5v6M5 2v3" stroke-width="1.500"/></svg>
  <span class="selbox"><select style="width:142px" aria-label="Zestaw roboczy"><option></option></select><svg width="6" height="4" color="#999"><use href="#chev"/></svg></span>
  <svg class="ico ms-2" width="10" height="11"><path d="M1 2h7v3h-4l-2 5M8 1v3M1 7h4" stroke="#888"/></svg><span class="ms-1" style="width:22px">:0</span>
  <svg width="30" height="12"><rect x="1" y="1" width="10" height="10" rx="1" fill="#888"/><rect x="18" y="1" width="10" height="10" fill="#888"/><path d="M22 3l4 6-3-1-2 3" fill="none" stroke="#ddd"/></svg>
  <span class="selbox ms-1"><select style="width:142px" aria-label="Opcje projektu"><option>Model główny</option></select><svg width="6" height="4" color="#999"><use href="#chev"/></svg></span>
  <span class="flex-grow-1"></span>
  <div class="d-flex align-items-center" style="width:192px;gap:6px">
    <svg class="ico" width="12" height="11"><path d="M1 1h4v3h-4zM7 1h4v3h-4zM5 4v4h2v-4M6 8v2" fill="#999"/></svg>
    <svg class="ico" width="12" height="11"><path d="M1 7l4-4 4-2v7zM5 9h5" fill="#999"/></svg>
    <svg class="ico" width="12" height="11"><path d="M2 1h5v5h-5zM7 4l3 5-3-1-2 2" fill="#999"/></svg>
    <svg class="ico" width="12" height="11"><path d="M2 2h8l-2 6-6 2zM7 7l3 3" fill="#999"/></svg>
    <svg class="ico" width="12" height="11"><path d="M1 3h3M3 1v4M7 1l4 4M11 1l-4 4M5 6v4M7 8h4M9 6v4"/></svg>
    <svg class="ico" width="12" height="11"><circle cx="6" cy="5.500" r="3.500" stroke-width="2" stroke-dasharray="2 1"/></svg>
    <span class="d-flex align-items-center"><svg class="ico" width="11" height="11"><path d="M1 1h9l-3.500 4.500v4.500l-2-1v-3.500z" fill="#dfe8f3" stroke="#46566d"/></svg>:0</span>
  </div>
</footer>

<div class="dlg" role="dialog" aria-label="Typy rodzin">
  <header class="d-flex align-items-center justify-content-between"><span>Typy rodzin</span><button class="tb" aria-label="Zamknij okno"><svg width="8" height="8"><path d="M.500.500l7 7M7.500.500l-7 7" stroke="#222"/></svg></button></header>
  <div class="inner">
    <div class="d-flex align-items-center" style="height:18px">
      <label for="tn" class="text-nowrap" style="width:49px">Nazwa typu:</label>
      <span class="selbox"><select id="tn" class="typesel d-block" disabled><option></option></select><svg width="6" height="4" color="#aaa"><use href="#chev"/></svg></span>
      <button class="tb q18 ms-2" style="height:17px;background:#d3e7f8" aria-label="Nowy typ"><svg width="12" height="12"><use href="#newdoc"/></svg></button>
      <button class="tb" style="width:24px" aria-label="Zmień nazwę"><svg width="12" height="10"><path d="M.500.500h11v9h-11z" fill="#e6eef5" stroke="#7c93ab"/><path d="M2 7l2-4 1 4M6 3v4M8 3h2M8 5h2M8 7h2" fill="none" stroke="#4f7fb4"/></svg></button>
      <button class="tb q18" aria-label="Usuń typ"><svg width="12" height="12"><use href="#deldoc"/></svg></button>
    </div>
    <div class="find d-flex align-items-center"><input type="text" placeholder="Wyszukaj parametry" aria-label="Wyszukaj parametry"><button class="tb me-1" aria-label="Szukaj parametru"><svg width="11" height="11" viewBox="0 0 11 11"><circle cx="4.500" cy="4.500" r="3.500" fill="#e4f1f8" stroke="#54606c"/><path d="M7 7l3.500 3.500" stroke="#333" stroke-width="2"/></svg></button></div>
    <div class="gridwrap d-flex">
      <table class="ptab">
        <colgroup><col style="width:112px"><col style="width:112px"><col style="width:117px"><col style="width:48px"></colgroup>
        <thead><tr><th>Parametr</th><th>Wartość</th><th>Wzór</th><th>Zablokuj</th></tr></thead>
        <tbody id="rows"></tbody>
      </table>
      <div class="d-flex flex-column align-items-center" style="width:12px">
        <button class="tb" style="height:34px;padding-bottom:22px" aria-label="W górę listy"><svg width="6" height="4"><path d="M.500 3.500L3 1l2.500 2.500" fill="none" stroke="#333"/></svg></button>
        <i class="tthumb"></i>
        <button class="tb" style="height:12px" aria-label="W dół listy"><svg width="6" height="4"><use href="#chev"/></svg></button>
      </div>
    </div>
    <div class="d-flex align-items-center" style="height:36px">
      <button class="tb q17" aria-label="Edytuj"><svg width="12" height="12"><path d="M1 11l1-3.500 7-7 2 2-7 7z" fill="#e8e4d6" stroke="#555"/><path d="M1 11l1-3 2 2z" fill="#333"/></svg></button>
      <button class="tb" style="width:25px" aria-label="Nowy parametr"><svg width="12" height="12"><use href="#newdoc"/></svg></button>
      <button class="tb q17" aria-label="Usuń parametr"><svg width="12" height="12"><use href="#deldoc"/></svg></button>
      <button class="tb" style="width:25px" aria-label="Przenieś w górę"><svg class="ico" width="12" height="11"><path d="M3 10v-9M.500 3.500l2.500-2.500 2.500 2.500" stroke="#8796a6" stroke-width="1.500"/><path d="M7 1.500h5M7 5.500h4M7 9.500h5M7 1v9" stroke="#a8b4c0"/></svg></button>
      <button class="tb q17" aria-label="Przenieś w dół"><svg class="ico" width="12" height="11"><path d="M3 1v9M.500 7.500l2.500 2.500 2.500-2.500" stroke="#8796a6" stroke-width="1.500"/><path d="M7 1.500h5M7 5.500h4M7 9.500h5M7 1v9" stroke="#a8b4c0"/></svg></button>
      <button class="tb ms-2" style="width:25px" aria-label="Sortuj rosnąco"><svg class="ico" width="10" height="11"><path d="M0 5l2-4.500 2 4.500M.500 6.500h3.500l-3.500 4h4M1 3.500h2" stroke="#2f5a8c"/><path d="M7.500 0v10M5.500 8l2 2 2-2" stroke="#333"/></svg></button>
      <button class="tb q17" aria-label="Sortuj malejąco"><svg class="ico" width="10" height="11"><path d="M0 5l2-4.500 2 4.500M.500 6.500h3.500l-3.500 4h4M1 3.500h2" stroke="#2f5a8c"/><path d="M7.500 11v-10M5.500 3l2-2 2 2" stroke="#333"/></svg></button>
      <button class="wb ms-auto" style="width:125px;margin-right:-2px">Zarządzaj tabelami</button>
    </div>
    <div class="d-flex" style="margin-right:-1px;gap:6px">
      <a href="#" class="me-auto text-nowrap">W jaki sposób zarządzać typami rodzin?</a>
      <button class="wb def">OK</button><button class="wb">Anuluj</button><button class="wb">Zastosuj</button>
    </div>
  </div>
</div>

<svg class="notes" width="540" height="510" fill="none" stroke="#1b90ab" stroke-width="2">
  <path d="M127 195H93V466M93 274H127M93 301H127M65 467H127"/>
  <path d="M351 332H469V432H351ZM373 432V478"/>
  <g fill="#1b90ab" stroke="none" font-size="20" text-anchor="middle"><text x="50" y="475">1</text><text x="372" y="507">2</text></g>
</svg>

<script src="https://cdn.jsdelivr.net/npm/bootstrap@5.3.0/dist/js/bootstrap.bundle.min.js"></script>
<script>
const D=' (domyślnie)';
// [name, value, formula, greyed, lockable]
const groups=[
 ['Tekst',[['ElemId'+D,'baseID',''],['XYZ1'+D,'',''],['XYZ2'+D,'',''],['XYZ3'+D,'',''],['XYZ4'+D,'','']]],
 ['Wymiary',[['Depth',"1'\u00a0 0\"",'',0,1]]],
 ['Inne',[['Aperture Ratio'+D,'0.300000',''],['ETFE Inflation Ratio'+D,'1.000000',''],['filletArc'+D,'0.173250','filletT - filletT / 100',1],['filletT'+D,'0.175000','invT / 4',1],['invSmallFillet','0.904760','1 - smallFillet'],['invFilletT'+D,'0.825000','1 - filletT',1],['invT'+D,'0.700000','1 - t',1],['smallFillet','0.095240',''],['smallFilletArc','0.094288','smallFillet - smallFillet / 100'],['t'+D,'0.300000','if(Aperture Ratio < 0.49, if(Ap',1],['uDiv','4','',0,1],['vDiv','4','',0,1]]],
 ['Dane identyfikacyjne',[]]];
let h='';
for(const [g,rows] of groups){
  const d=rows.length?'M1 3l2-2 2 2M1 6l2-2 2 2':'M1 1l2 2 2-2M1 4l2 2 2-2';
  h+=`<tr class="gap"><td colspan="4"></td></tr><tr class="sec"><th colspan="4">${g}<button class="tb" aria-label="Zwiń ${g}"><svg width="6" height="8"><path d="${d}" fill="none" stroke="#111"/></svg></button></th></tr>`;
  rows.forEach((r,i)=>{h+=`<tr class="${i%2?'':'h13'} ${r[3]?'gray':''}"><td>${r[0]}</td><td>${r[1]}</td><td>= ${r[2].replace('<','&lt;')}</td><td>${r[4]?`<input type="checkbox" aria-label="Zablokuj ${r[0]}">`:''}</td></tr>`});
}
h+='<tr class="tail"><td></td><td></td><td></td><td></td></tr>';
document.getElementById('rows').innerHTML=h;
</script>
</body>
</html>
